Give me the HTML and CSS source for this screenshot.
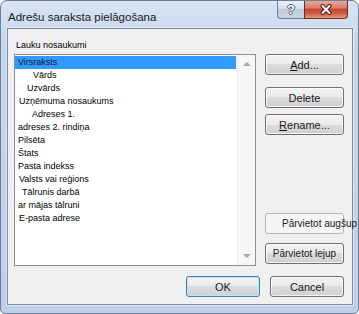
FILE: index.html
```html
<!DOCTYPE html>
<html lang="lv">
<head>
    <meta charset="UTF-8">
    <title>Adrešu saraksta pielāgošana</title>
    <link rel="stylesheet" href="styles.css">
</head>
<body>
    <div class="window">
        <div class="titlebar">
            <span class="title">Adrešu saraksta pielāgošana</span>
            <div class="caption-buttons">
                <div class="cap-btn help">?</div>
                <div class="cap-btn close">
                    <svg width="14" height="11" viewBox="0 0 14 11">
                        <path d="M3.5 2 L10.5 9 M10.5 2 L3.5 9" stroke="#5b1d16" stroke-width="4" stroke-linecap="round"/>
                        <path d="M3.5 2 L10.5 9 M10.5 2 L3.5 9" stroke="#fff" stroke-width="2" stroke-linecap="round"/>
                    </svg>
                </div>
            </div>
        </div>

        <div class="client">
            <div class="content">
                <!-- Field list -->
                <div class="fields">
                    <div class="fields-label">Lauku nosaukumi</div>
                    <div class="listbox">
                        <ul class="items">
                            <li class="selected">Virsraksts</li>
                            <li class="indent-15">Vārds</li>
                            <li class="indent-9">Uzvārds</li>
                            <li class="indent-1">Uzņēmuma nosaukums</li>
                            <li class="indent-14">Adreses 1.</li>
                            <li>adreses 2. rindiņa</li>
                            <li>Pilsēta</li>
                            <li>Štats</li>
                            <li>Pasta indekss</li>
                            <li class="indent-1">Valsts vai reģions</li>
                            <li class="indent-4">Tālrunis darbā</li>
                            <li>ar mājas tālruni</li>
                            <li class="indent-1">E-pasta adrese</li>
                        </ul>
                        <div class="scrollbar">
                            <span class="arrow up"></span>
                            <span class="arrow down"></span>
                        </div>
                    </div>
                </div>

                <!-- Field actions -->
                <div class="side">
                    <button class="btn btn-add"><u>A</u>dd...</button>
                    <button class="btn btn-delete">Delete</button>
                    <button class="btn btn-rename"><u>R</u>ename...</button>
                    <button class="btn btn-flat btn-up">Pārvietot augšup</button>
                    <button class="btn btn-small btn-down">Pārvietot lejup</button>
                </div>
            </div>

            <div class="footer">
                <button class="btn btn-default">OK</button>
                <button class="btn">Cancel</button>
            </div>
        </div>
    </div>
</body>
</html>
```

FILE: styles.css
```css
html, body {
    margin: 0;
    padding: 0;
    background: #fff;
}
body {
    font-family: 'Liberation Sans', Arial, sans-serif;
    width: 359px;
    height: 314px;
    overflow: hidden;
}
.window {
    box-sizing: border-box;
    width: 359px;
    height: 314px;
    display: flex;
    flex-direction: column;
    border: 1px solid #6a7f9c;
    border-radius: 7px 7px 5px 5px;
    background: linear-gradient(to bottom, #dae5f2 0, #c6d7eb 40px, #bed0e6 100%);
}
.titlebar {
    height: 27px;
    display: flex;
    align-items: flex-start;
    flex-shrink: 0;
}
.title {
    padding: 9px 0 0 7px;
    font-size: 11.5px;
    line-height: 14px;
    color: #1b1b1b;
    white-space: nowrap;
}
.caption-buttons {
    margin-left: auto;
    margin-right: 10px;
    display: flex;
}
.cap-btn {
    box-sizing: border-box;
    height: 18px;
    display: flex;
    align-items: center;
    justify-content: center;
}
.help {
    width: 27px;
    border: 1px solid #6b7d96;
    border-top: none;
    border-right: none;
    border-radius: 0 0 0 4px;
    background: linear-gradient(to bottom, #e8eef6 0, #d7e1ee 45%, #bccbdd 50%, #c9d6e6 100%);
    color: #fff;
    font-size: 13px;
    font-weight: bold;
    text-shadow: 1px 0 0 #4a5d77, -1px 0 0 #4a5d77, 0 1px 0 #4a5d77, 0 -1px 0 #4a5d77;
}
.close {
    width: 44px;
    border: 1px solid #6e2d24;
    border-top: none;
    border-radius: 0 0 4px 0;
    background: linear-gradient(to bottom, #e8a797 0, #d9806d 40%, #c5432f 50%, #cf5f48 75%, #e09a82 100%);
}
.client {
    flex: 1;
    margin: 0 5px 8px 6px;
    border: 1px solid #7a8ba3;
    background: #f0f0f0;
    padding: 11px 8px 7px 6px;
    display: flex;
    flex-direction: column;
    box-shadow: 0 0 0 1px rgba(255, 255, 255, 0.45);
}
.content {
    display: flex;
    gap: 9px;
}
.fields {
    width: 242px;
}
.fields-label {
    font-size: 9px;
    line-height: 11px;
    padding-left: 2px;
    color: #000;
    margin-bottom: 3px;
}
.listbox {
    box-sizing: border-box;
    height: 212px;
    border: 1px solid #8e8f92;
    background: #fff;
    display: flex;
}
.items {
    flex: 1;
    list-style: none;
    margin: 0;
    padding: 1px 1px 0 0;
}
.items li {
    font-size: 9px;
    line-height: 13px;
    height: 13px;
    padding-left: 3px;
    color: #000;
    white-space: nowrap;
}
.items li.selected {
    background: #3399ff;
    color: #0a1a33;
}
.items li.indent-1 { padding-left: 4px; }
.items li.indent-4 { padding-left: 7px; }
.items li.indent-9 { padding-left: 12px; }
.items li.indent-14 { padding-left: 17px; }
.items li.indent-15 { padding-left: 18px; }
.scrollbar {
    width: 17px;
    background: #f7f7f7;
    border-left: 1px solid #ececec;
    display: flex;
    flex-direction: column;
    justify-content: space-between;
    align-items: center;
    padding: 7px 0 7px;
}
.arrow {
    width: 0;
    height: 0;
    border-left: 4px solid transparent;
    border-right: 4px solid transparent;
}
.arrow.up {
    border-bottom: 4px solid #a8a8a8;
}
.arrow.down {
    border-top: 4px solid #a8a8a8;
}
.side {
    width: 79px;
    display: flex;
    flex-direction: column;
    padding-top: 14px;
}
.btn {
    box-sizing: border-box;
    height: 21px;
    width: 79px;
    padding: 0;
    border: 1px solid #707070;
    border-radius: 3px;
    background: linear-gradient(to bottom, #f2f2f2 0, #ebebeb 50%, #dddddd 50%, #cfcfcf 100%);
    box-shadow: inset 0 0 0 1px rgba(255, 255, 255, 0.75);
    font-family: 'Liberation Sans', Arial, sans-serif;
    font-size: 11px;
    color: #1a1a1a;
    white-space: nowrap;
}
.btn-delete { margin-top: 12px; }
.btn-rename { margin-top: 6px; }
.btn-up { margin-top: 78px; }
.btn-down { margin-top: 9px; }
.btn-small {
    font-size: 10px;
}
.btn-flat {
    font-size: 10px;
    text-align: left;
    padding-left: 16px;
    overflow: visible;
    border-color: #b5b5b5;
    background: #f5f5f5;
    box-shadow: none;
}
.footer {
    margin-top: 10px;
    display: flex;
    justify-content: flex-end;
    gap: 10px;
}
.footer .btn {
    width: 74px;
}
.btn-default {
    border-color: #3c7fb1;
    box-shadow: inset 0 0 0 1px #bfe6f7;
}
```
